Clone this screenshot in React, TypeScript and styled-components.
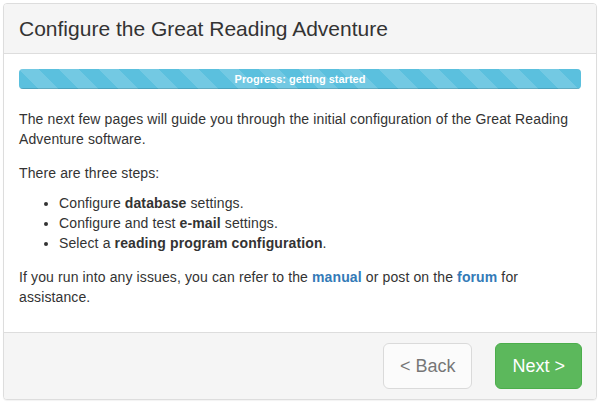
import styled, { createGlobalStyle } from "styled-components";

const GlobalStyle = createGlobalStyle`
  html, body {
    margin: 0;
    padding: 0;
    background: #fff;
  }
  body {
    padding: 3px;
    font-family: "Liberation Sans", Arial, Helvetica, sans-serif;
    font-size: 14px;
    line-height: 20px;
    color: #333;
  }
  * {
    box-sizing: border-box;
  }
`;

const Panel = styled.div`
  width: 594px;
  border: 1px solid #ddd;
  border-radius: 4px;
  background: #fff;
  box-shadow: 0 1px 1px rgba(0, 0, 0, 0.05);
  overflow: hidden;
`;

const Heading = styled.div`
  background: #f5f5f5;
  border-bottom: 1px solid #ddd;
  padding: 10px 15px;
`;

const Title = styled.h3`
  margin: 0;
  font-size: 21px;
  line-height: 29px;
  font-weight: normal;
  color: #333;
`;

const Body = styled.div`
  padding: 15px;
`;

const Progress = styled.div`
  height: 20px;
  margin-bottom: 20px;
  border-radius: 4px;
  background: #f5f5f5;
  overflow: hidden;
  box-shadow: inset 0 1px 2px rgba(0, 0, 0, 0.1);
`;

const Bar = styled.div`
  height: 100%;
  background-color: #5bc0de;
  background-image: linear-gradient(
    45deg,
    rgba(255, 255, 255, 0.15) 25%,
    transparent 25%,
    transparent 50%,
    rgba(255, 255, 255, 0.15) 50%,
    rgba(255, 255, 255, 0.15) 75%,
    transparent 75%,
    transparent
  );
  background-size: 40px 40px;
  box-shadow: inset 0 -1px 0 rgba(0, 0, 0, 0.15);
  color: #fff;
  font-size: 11px;
  font-weight: bold;
  line-height: 20px;
  text-align: center;
`;

const Text = styled.div`
  letter-spacing: 0.12px;
`;

const Para = styled.p<{ $gap?: number }>`
  margin: 0 0 ${(p) => p.$gap ?? 10}px;
`;

const Steps = styled.ul`
  margin: 0 0 14px;
  padding-left: 40px;
`;

const Link = styled.a`
  color: #337ab7;
  font-weight: bold;
  text-decoration: none;
`;

const Footer = styled.div`
  background: #f5f5f5;
  border-top: 1px solid #ddd;
  padding: 10px 14px 10px 15px;
  display: flex;
  justify-content: flex-end;
  gap: 23px;
`;

const Button = styled.button<{ $primary?: boolean }>`
  font-family: inherit;
  font-size: 18px;
  line-height: 24px;
  padding: 10px 16px;
  border-radius: 6px;
  border: 1px solid ${(p) => (p.$primary ? "#4cae4c" : "#ccc")};
  background: ${(p) => (p.$primary ? "#5cb85c" : "#fff")};
  color: ${(p) => (p.$primary ? "#fff" : "#333")};
  opacity: ${(p) => (p.$primary ? 1 : 0.65)};
  cursor: ${(p) => (p.$primary ? "pointer" : "not-allowed")};
`;

export default function App() {
  return (
    <>
      <GlobalStyle />
      <Panel>
        <Heading>
          <Title>Configure the Great Reading Adventure</Title>
        </Heading>
        <Body>
          <Progress>
            <Bar>Progress: getting started</Bar>
          </Progress>
          <Text>
            <Para $gap={14}>
              The next few pages will guide you through the initial configuration of the Great
              Reading Adventure software.
            </Para>
            <Para>There are three steps:</Para>
            <Steps>
              <li>
                Configure <b>database</b> settings.
              </li>
              <li>
                Configure and test <b>e-mail</b> settings.
              </li>
              <li>
                Select a <b>reading program configuration</b>.
              </li>
            </Steps>
            <Para>
              If you run into any issues, you can refer to the <Link href="#">manual</Link> or
              post on the <Link href="#">forum</Link> for assistance.
            </Para>
          </Text>
        </Body>
        <Footer>
          <Button disabled>&lt; Back</Button>
          <Button $primary>Next &gt;</Button>
        </Footer>
      </Panel>
    </>
  );
}
